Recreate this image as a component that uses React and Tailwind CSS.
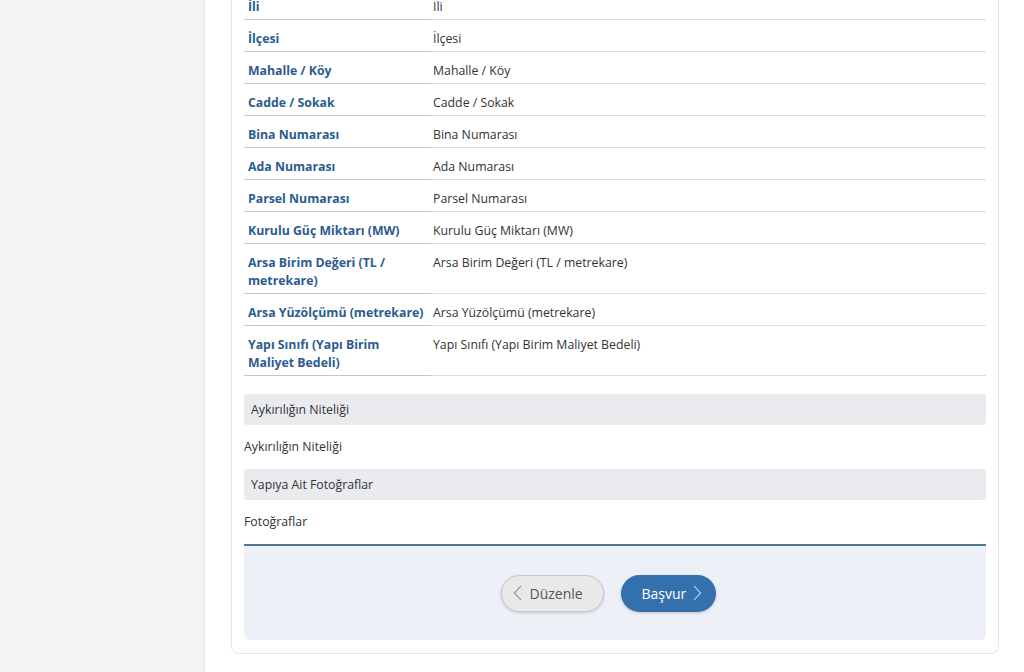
import React from "react";

const rows = [
  ["İli", "İli"],
  ["İlçesi", "İlçesi"],
  ["Mahalle / Köy", "Mahalle / Köy"],
  ["Cadde / Sokak", "Cadde / Sokak"],
  ["Bina Numarası", "Bina Numarası"],
  ["Ada Numarası", "Ada Numarası"],
  ["Parsel Numarası", "Parsel Numarası"],
  ["Kurulu Güç Miktarı (MW)", "Kurulu Güç Miktarı (MW)"],
  ["Arsa Birim Değeri (TL / metrekare)", "Arsa Birim Değeri (TL / metrekare)"],
  ["Arsa Yüzölçümü (metrekare)", "Arsa Yüzölçümü (metrekare)"],
  ["Yapı Sınıfı (Yapı Birim Maliyet Bedeli)", "Yapı Sınıfı (Yapı Birim Maliyet Bedeli)"],
];

function ChevronLeft({ className }) {
  return (
    <svg width="9" height="16" viewBox="0 0 9 16" className={className} fill="none">
      <polyline points="8,1 1.5,8 8,15" stroke="currentColor" strokeWidth="1.1" />
    </svg>
  );
}
function ChevronRight({ className }) {
  return (
    <svg width="9" height="16" viewBox="0 0 9 16" className={className} fill="none">
      <polyline points="1,1 7.5,8 1,15" stroke="currentColor" strokeWidth="1.1" />
    </svg>
  );
}

export default function App() {
  return (
    <div
      className="flex h-[672px] w-[1024px] overflow-hidden bg-white text-[12.3px] text-[#333]"
      style={{ fontFamily: '"Open Sans", "Noto Sans", sans-serif' }}
    >
      <aside className="w-[205px] shrink-0 bg-[#f3f4f6] border-r border-[#e6e8eb]" />
      <main className="flex-1 pl-[26px] pr-[25px]">
        <div className="mt-[-12px] border border-t-0 border-[#e4e6e8] rounded-b-[8px] px-[12px] pb-[13px]">
          <div className="grid grid-cols-[187px_1fr]">
            {rows.map(([l, v], i) => (
              <React.Fragment key={i}>
                <div className="border-b border-[#bccad6] pl-[4px] pr-[4px] pt-[10px] pb-[3px] leading-[18px] font-bold text-[#2c5c8f]">
                  {l}
                </div>
                <div className="border-b border-[#dedede] pl-[2px] pt-[10px] pb-[3px] leading-[18px] text-[#333]">
                  {v}
                </div>
              </React.Fragment>
            ))}
          </div>

          <div className="mt-[18px] h-[31px] flex items-center px-[7px] bg-[#e9ebee] rounded-[3px] leading-[18px]">
            Aykırılığın Niteliği
          </div>
          <div className="mt-[13px] mb-[13px] leading-[18px]">Aykırılığın Niteliği</div>
          <div className="h-[31px] flex items-center px-[7px] bg-[#e9ebee] rounded-[3px] leading-[18px]">
            Yapıya Ait Fotoğraflar
          </div>
          <div className="mt-[13px] mb-[13px] leading-[18px]">Fotoğraflar</div>

          <div className="border-t-2 border-[#4d7995] bg-[#edf1f7] h-[96px] rounded-b-[6px] flex items-center justify-center gap-[17px] pr-[14px]">
            <button className="h-[37px] w-[103px] rounded-full bg-[#e9e9e9] border border-[#c9c9c9] text-[#555] text-[14px] flex items-center justify-start pl-[11px] gap-[8px] shadow-[0_1px_3px_rgba(0,0,0,0.18)]">
              <ChevronLeft className="text-[#888]" />
              <span>Düzenle</span>
            </button>
            <button className="h-[37px] w-[95px] rounded-full bg-[#3470ae] text-white text-[14px] flex items-center justify-start pl-[21px] gap-[7px] shadow-[0_1px_3px_rgba(0,0,0,0.2)]">
              <span>Başvur</span>
              <ChevronRight className="text-[#cfe0f2]" />
            </button>
          </div>
        </div>
      </main>
    </div>
  );
}
